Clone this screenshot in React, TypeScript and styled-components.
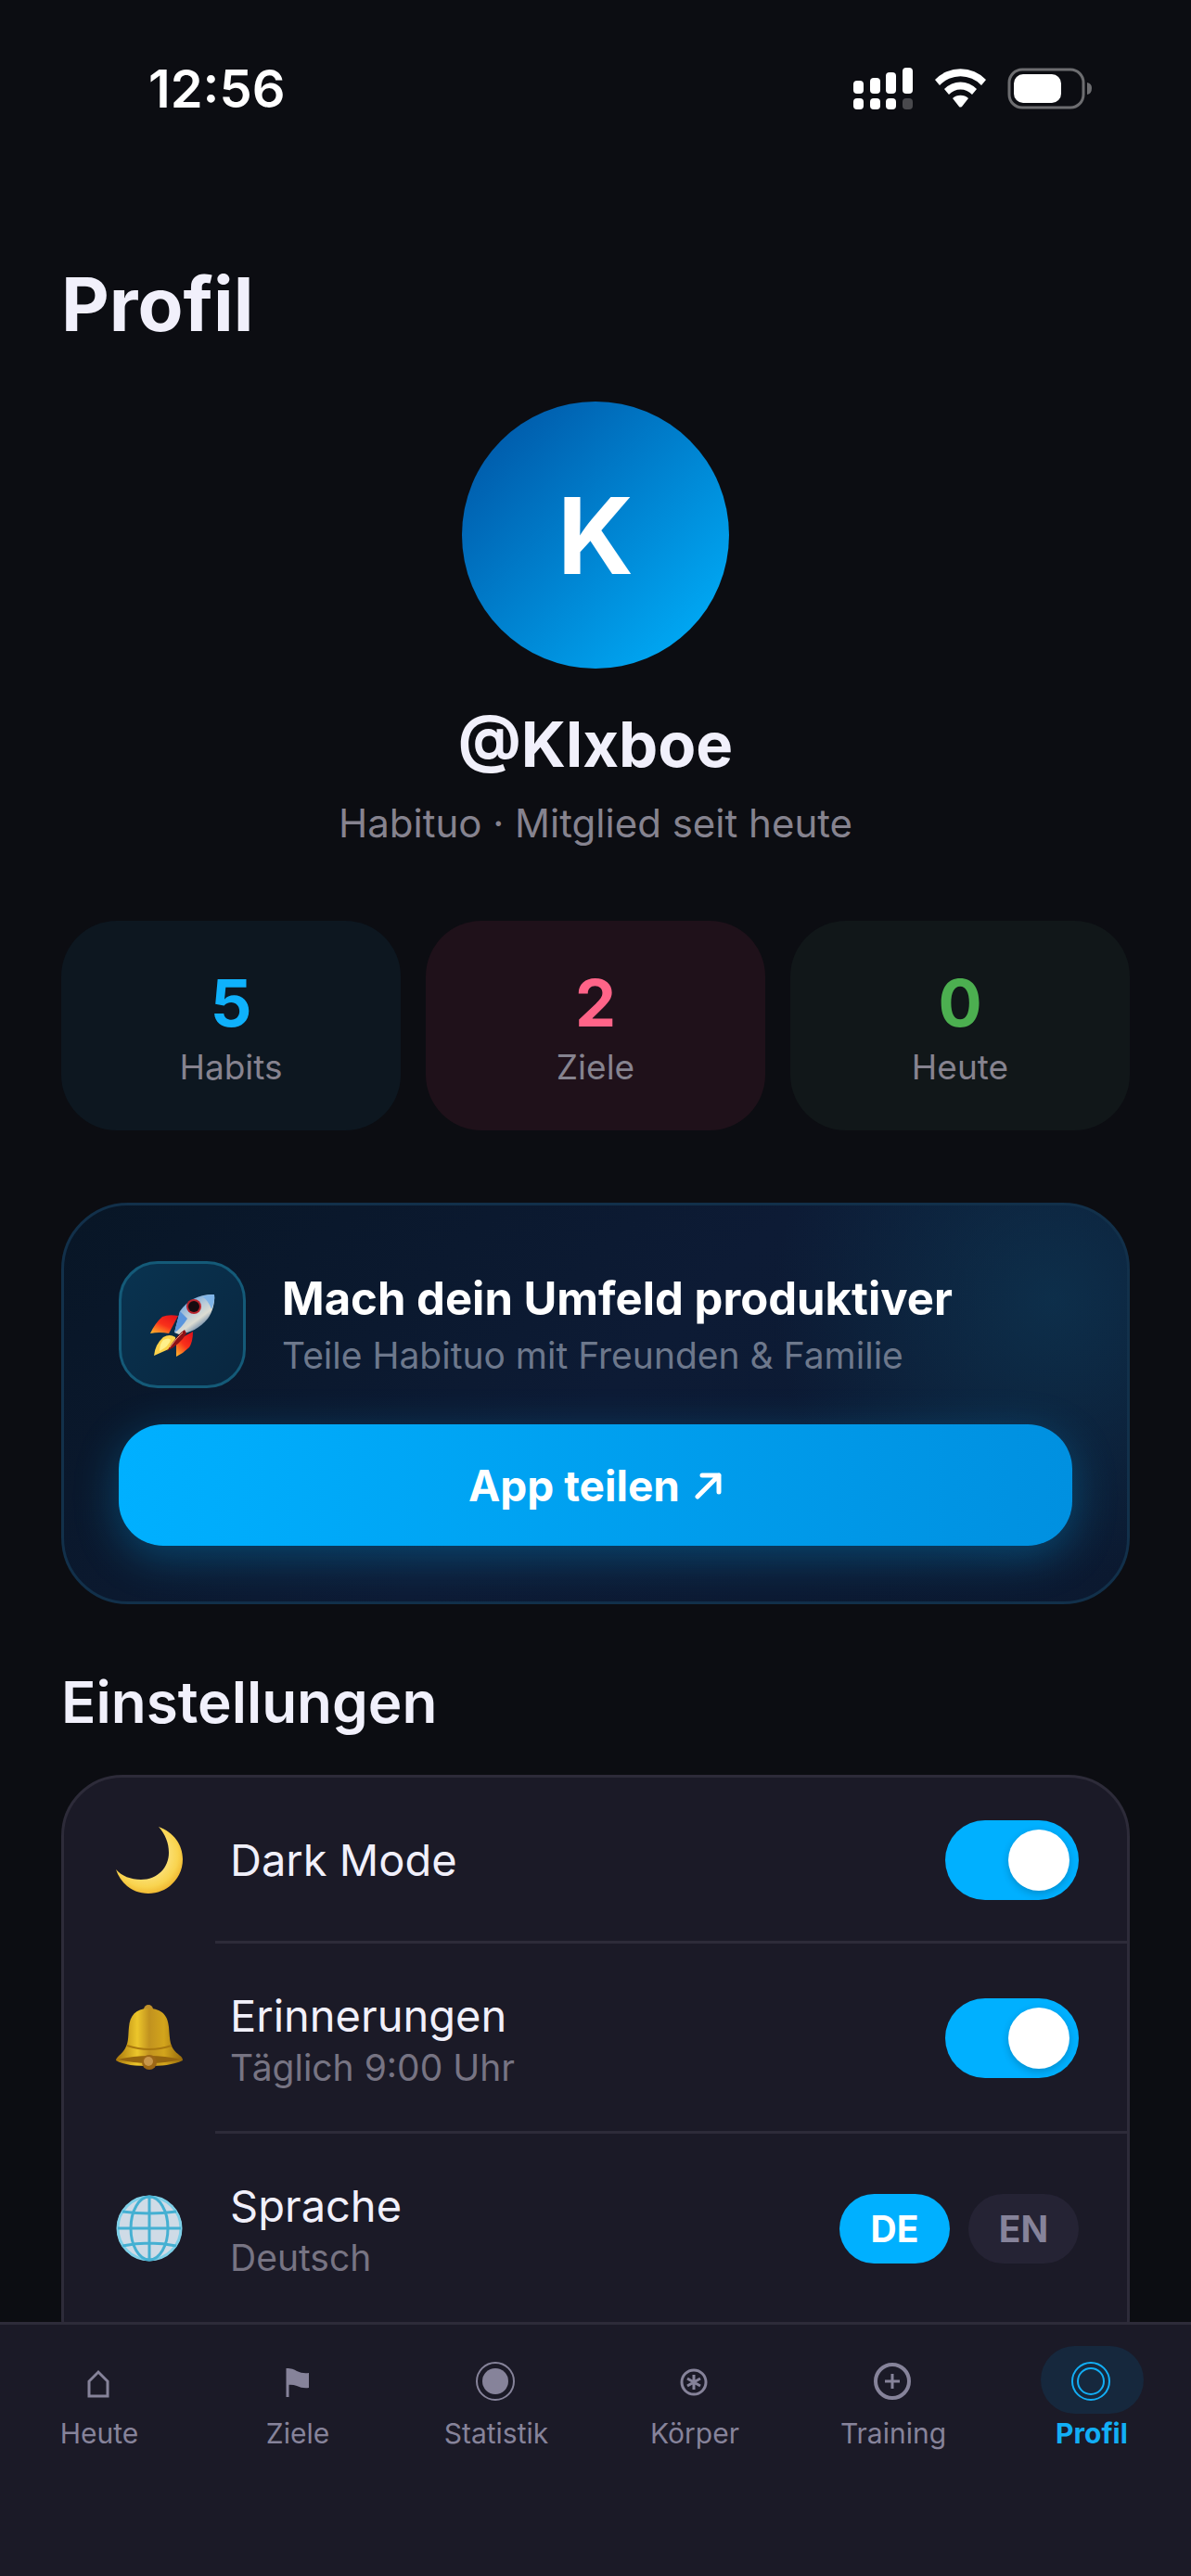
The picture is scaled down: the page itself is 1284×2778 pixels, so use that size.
import React, { useState } from 'react'
import styled, { createGlobalStyle } from 'styled-components'

const RocketIcon = () => (
  <svg width="70" height="68" viewBox="0 0 70 68" aria-hidden="true">
    <defs>
      <linearGradient id="rocketBody" x1="0.2" y1="0.1" x2="0.75" y2="0.85">
        <stop offset="0" stopColor="#5b9be0" />
        <stop offset="0.45" stopColor="#b9cbd8" />
        <stop offset="0.7" stopColor="#dcdcd2" />
        <stop offset="1" stopColor="#4a6f9c" />
      </linearGradient>
      <linearGradient id="rocketFin" x1="0.8" y1="0" x2="0.1" y2="1">
        <stop offset="0" stopColor="#e3141a" />
        <stop offset="0.5" stopColor="#f9301a" />
        <stop offset="1" stopColor="#ffb32c" />
      </linearGradient>
    </defs>
    <path d="M13 25 Q20 22 30 24 L20 43 Q10 41 0 43 Q5 32 13 25Z" fill="url(#rocketFin)" />
    <path d="M35 47 L46 41 Q46 52 42 58 Q36 64 28 68 Q28 60 28 54Z" fill="url(#rocketFin)" />
    <path d="M14 47 Q21 43 27 47 Q29 54 22 59 Q13 63 4 67 Q5 55 14 47Z" fill="#fbd24b" />
    <path d="M14 50 Q20 47 22 50 Q20 57 10 62 Q10 54 14 50Z" fill="#fff08a" />
    <path d="M69 1 C54 0 40 7 32 19 L26 42 L31 44 C42 43 54 37 62 27 C67 20 70 10 69 1Z" fill="url(#rocketBody)" />
    <path d="M32 19 L26 42 Q33 38 40 27Z" fill="#5a95dd" />
    <path d="M56 3 Q63 1 69 1 Q70 8 66 17 Q63 8 56 3Z" fill="#7fb4e8" />
    <path d="M37 39 Q29 44 18 62 Q32 55 39 43Z" fill="#8e1116" />
    <path d="M35 42 Q28 48 21 58" stroke="#e9a37a" strokeWidth="1" fill="none" />
    <ellipse cx="47" cy="14" rx="8" ry="8" fill="#b7232b" />
    <ellipse cx="47" cy="14" rx="6" ry="6" fill="#160b10" />
  </svg>
)

const MoonIcon = () => (
  <svg width="72" height="72" viewBox="0 0 72 72" aria-hidden="true">
    <defs>
      <radialGradient id="moon" cx="0.45" cy="0.42" r="0.6">
        <stop offset="0.5" stopColor="#fbe17a" />
        <stop offset="0.8" stopColor="#f9d44f" />
        <stop offset="1" stopColor="#efb52e" />
      </radialGradient>
    </defs>
    <path
      d="M46 0 C62 6 72 19 72 35 C72 56 55 72 35 72 C19 72 5 62 0 46 C6 53 16 57 27 57 C45 57 57 44 57 28 C57 17 53 8 46 0Z"
      fill="url(#moon)"
    />
  </svg>
)

const BellIcon = () => (
  <svg width="72" height="72" viewBox="0 0 72 72" aria-hidden="true">
    <defs>
      <linearGradient id="bell" x1="0" x2="1">
        <stop offset="0" stopColor="#a8760c" />
        <stop offset="0.32" stopColor="#ecc62b" />
        <stop offset="0.5" stopColor="#c1921f" />
        <stop offset="0.72" stopColor="#d3a51c" />
        <stop offset="1" stopColor="#94680c" />
      </linearGradient>
    </defs>
    <circle cx="35" cy="5" r="5" fill="#c0912b" />
    <path
      d="M35 4 C50 4 56 12 57 24 C58 36 58 42 62 48 C66 54 72 55 72 60 C62 65 48 66 36 66 C22 66 8 65 0 60 C0 56 7 53 10 47 C14 40 13 33 14 24 C15 12 21 4 35 4Z"
      fill="url(#bell)"
    />
    <path d="M12 44 Q36 52 60 44" stroke="#a9780f" strokeWidth="2" fill="none" />
    <path d="M2 59 Q36 51 70 59 Q36 67 2 59Z" fill="#96660f" />
    <circle cx="36" cy="62" r="8" fill="#9c6615" />
    <circle cx="35" cy="61" r="5" fill="#c8964a" />
  </svg>
)

const GlobeIcon = () => (
  <svg width="72" height="72" viewBox="0 0 72 72" aria-hidden="true">
    <circle cx="36" cy="36" r="35" fill="#cfdbe6" />
    <g stroke="#45b0d2" strokeWidth="3" fill="none">
      <circle cx="36" cy="36" r="34" stroke="#7fd0e8" />
      <ellipse cx="36" cy="36" rx="20" ry="34" />
      <path d="M36 2 V70 M2 36 H70 M7 18 Q36 22 65 18 M7 55 Q36 49 65 55" />
    </g>
  </svg>
)

const ArrowIcon = () => (
  <svg width="30" height="30" viewBox="0 0 30 30" fill="none" stroke="#fff" strokeWidth="5" strokeLinecap="round" strokeLinejoin="round" aria-hidden="true">
    <path d="M3 27 L26 4 M8 4 H26 V22" />
  </svg>
)

const StatusIcons = () => (
  <svg width="258" height="48" viewBox="0 0 258 48" aria-hidden="true">
    <g fill="#fff">
      <rect x="0" y="15" width="11" height="14" rx="4" />
      <rect x="18" y="12" width="11" height="17" rx="4" />
      <rect x="35" y="6" width="11" height="23" rx="4" />
      <rect x="53" y="1" width="11" height="28" rx="4" />
      <rect x="0" y="34" width="11" height="12" rx="4" />
      <rect x="18" y="34" width="11" height="12" rx="4" />
      <rect x="35" y="34" width="11" height="12" rx="4" />
      <rect x="53" y="34" width="11" height="12" rx="4" opacity="0.25" />
      <path d="M88 14 A38 38 0 0 1 143 14 L138 20 A31 31 0 0 0 93 20Z" />
      <path d="M98 24 A24 24 0 0 1 133 24 L128 30 A17 17 0 0 0 103 30Z" />
      <path d="M107 34 A13 13 0 0 1 124 34 L117 43 Q115 44 114 43Z" />
      <rect x="173" y="8" width="51" height="31" rx="10" />
      <path d="M252 17 Q257 18 257 23 Q257 29 252 30Z" opacity="0.4" />
    </g>
    <rect x="168" y="3" width="80" height="41" rx="14" fill="none" stroke="#fff" strokeOpacity="0.4" strokeWidth="3" />
  </svg>
)

const tabIcons: Record<string, React.ReactNode> = {
  Heute: <path d="M12 37 V21 L22 11 L32 21 V37Z" strokeWidth="3" />,
  Ziele: (
    <>
      <path d="M12 7 V38" strokeWidth="3" />
      <path d="M11 7 Q18 7 22 10 Q28 13 35 12 V28 Q28 29 22 26 Q17 24 11 25Z" fill="currentColor" stroke="none" />
    </>
  ),
  Statistik: (
    <>
      <circle cx="22" cy="21" r="20" strokeWidth="2" />
      <circle cx="22" cy="21" r="14" fill="currentColor" stroke="none" />
    </>
  ),
  'Körper': (
    <>
      <circle cx="22" cy="22" r="13" strokeWidth="3" />
      <path d="M22 14 V30 M15 18 L29 26 M29 18 L15 26" strokeWidth="3" />
    </>
  ),
  Training: (
    <>
      <circle cx="22" cy="21" r="18" strokeWidth="4" />
      <path d="M22 13 V29 M14 21 H30" strokeWidth="3" />
    </>
  ),
  Profil: (
    <>
      <circle cx="22" cy="21" r="20" strokeWidth="2" />
      <circle cx="22" cy="21" r="14" strokeWidth="2" />
    </>
  ),
}

const stats = [
  { value: 5, label: 'Habits', color: '#0fb1fb', bg: '#0d1720' },
  { value: 2, label: 'Ziele', color: '#ff6488', bg: '#1f111a' },
  { value: 0, label: 'Heute', color: '#4caf50', bg: '#111719' },
]

const App = () => {
  const [dark, setDark] = useState(true)
  const [reminders, setReminders] = useState(true)
  const [lang, setLang] = useState('DE')
  const [tab, setTab] = useState('Profil')

  return (
    <Screen>
      <GlobalStyle />
      <StatusBar>
        <Time>12:56</Time>
        <StatusIcons />
      </StatusBar>

      <Main>
        <Title>Profil</Title>

        <ProfileHead>
          <Avatar>K</Avatar>
          <UserName>@Klxboe</UserName>
          <Since>Habituo · Mitglied seit heute</Since>
        </ProfileHead>

        <Stats>
          {stats.map((s) => (
            <Stat key={s.label} $bg={s.bg}>
              <StatValue $color={s.color}>{s.value}</StatValue>
              <StatLabel>{s.label}</StatLabel>
            </Stat>
          ))}
        </Stats>

        <Promo>
          <PromoTop>
            <PromoIcon><RocketIcon /></PromoIcon>
            <div>
              <PromoTitle>Mach dein Umfeld produktiver</PromoTitle>
              <PromoText>Teile Habituo mit Freunden &amp; Familie</PromoText>
            </div>
          </PromoTop>
          <ShareButton type="button">App teilen <ArrowIcon /></ShareButton>
        </Promo>

        <SectionTitle>Einstellungen</SectionTitle>

        <List>
          <Row>
            <MoonIcon />
            <RowText htmlFor="dark">
              <RowName>Dark Mode</RowName>
            </RowText>
            <Switch id="dark" type="checkbox" checked={dark} onChange={() => setDark(!dark)} />
          </Row>
          <Divider />
          <Row>
            <BellIcon />
            <RowText htmlFor="reminders">
              <RowName>Erinnerungen</RowName>
              <RowHint>Täglich 9:00 Uhr</RowHint>
            </RowText>
            <Switch id="reminders" type="checkbox" checked={reminders} onChange={() => setReminders(!reminders)} />
          </Row>
          <Divider />
          <Row>
            <GlobeIcon />
            <RowText as="div">
              <RowName>Sprache</RowName>
              <RowHint>{lang === 'DE' ? 'Deutsch' : 'English'}</RowHint>
            </RowText>
            <Langs>
              {['DE', 'EN'].map((l) => (
                <LangButton key={l} type="button" $active={l === lang} aria-pressed={l === lang} onClick={() => setLang(l)}>
                  {l}
                </LangButton>
              ))}
            </Langs>
          </Row>
        </List>
      </Main>

      <TabBar>
        {Object.keys(tabIcons).map((name) => (
          <Tab key={name} href="#" $active={name === tab} onClick={() => setTab(name)}>
            <TabPill $active={name === tab}>
              <svg width="44" height="44" viewBox="1 -2 44 44" fill="none" stroke="currentColor" aria-hidden="true">
                {tabIcons[name]}
              </svg>
            </TabPill>
            {name}
          </Tab>
        ))}
      </TabBar>
    </Screen>
  )
}

export default App

const GlobalStyle = createGlobalStyle`
* {
  box-sizing: border-box;
}
body {
  margin: 0;
  background-color: #0c0d12;
  font-family: Inter, "Liberation Sans", sans-serif;
}
h1, h2, h3, p {
  margin: 0;
}
button {
  font-family: inherit;
  border: none;
  cursor: pointer;
}
svg {
  display: block;
  flex-shrink: 0;
}
`
const Screen = styled.div`
height: 100vh;
display: flex;
flex-direction: column;
color: #f1f0fb;
`
const StatusBar = styled.div`
height: 192px;
padding: 0 106px 0 160px;
display: flex;
align-items: center;
justify-content: space-between;
flex-shrink: 0;
`
const Time = styled.div`
font-size: 56px;
font-weight: 600;
color: #fff;
`
const Main = styled.main`
flex: 1;
min-height: 0;
overflow-y: auto;
scrollbar-width: none;
padding: 86px 66px 0;
`
const Title = styled.h1`
font-size: 80px;
font-weight: 700;
line-height: 100px;
`
const ProfileHead = styled.section`
margin-top: 55px;
display: flex;
flex-direction: column;
align-items: center;
`
const Avatar = styled.div`
width: 288px;
height: 288px;
border-radius: 50%;
background: linear-gradient(135deg, #0050a0, #00b4ff);
display: flex;
align-items: center;
justify-content: center;
color: #fff;
font-size: 114px;
font-weight: 700;
`
const UserName = styled.h2`
margin-top: 38px;
font-size: 67px;
font-weight: 700;
line-height: 88px;
`
const Since = styled.p`
margin-top: 16px;
font-size: 42px;
line-height: 50px;
color: #86838f;
`
const Stats = styled.section`
margin-top: 80px;
display: grid;
grid-template-columns: repeat(3, 1fr);
gap: 27px;
`
const Stat = styled.div<{ $bg: string }>`
padding: 45px 0 43px;
border-radius: 60px;
background-color: ${(p) => p.$bg};
text-align: center;
`
const StatValue = styled.div<{ $color: string }>`
font-size: 70px;
font-weight: 700;
line-height: 88px;
color: ${(p) => p.$color};
`
const StatLabel = styled.div`
font-size: 37px;
line-height: 50px;
color: #86838f;
`
const Promo = styled.section`
margin-top: 78px;
padding: 60px 59px;
border: 3px solid #12304a;
border-radius: 72px;
background: radial-gradient(circle 300px at 93% 24%, rgba(14, 60, 90, 0.6), transparent),
  linear-gradient(135deg, #081626, #0d1b35 50%, #0b1930);
`
const PromoTop = styled.div`
display: flex;
align-items: center;
gap: 39px;
`
const PromoIcon = styled.div`
width: 137px;
height: 137px;
flex-shrink: 0;
border: 3px solid #145a78;
border-radius: 42px;
background: linear-gradient(135deg, #093350, #09263f);
display: flex;
align-items: center;
justify-content: center;
`
const PromoTitle = styled.h3`
font-size: 49px;
font-weight: 700;
line-height: 66px;
color: #fff;
`
const PromoText = styled.p`
font-size: 39px;
line-height: 56px;
color: #6d788c;
`
const ShareButton = styled.button`
width: 100%;
height: 131px;
margin-top: 39px;
border-radius: 48px;
background: linear-gradient(90deg, #00b0ff, #0090e0);
box-shadow: 0 12px 48px rgba(0, 176, 255, 0.3);
display: flex;
align-items: center;
justify-content: center;
gap: 16px;
color: #fff;
font-size: 46px;
font-weight: 700;
`
const SectionTitle = styled.h2`
margin-top: 66px;
font-size: 62px;
font-weight: 600;
line-height: 80px;
`
const List = styled.section`
margin-top: 38px;
padding-bottom: 60px;
border: 3px solid #2d2b39;
border-radius: 66px;
background-color: #1b1a27;
`
const Row = styled.div`
padding: 46px 52px 44px 56px;
display: flex;
align-items: center;
gap: 51px;
`
const RowText = styled.label`
flex: 1;
display: flex;
flex-direction: column;
`
const RowName = styled.span`
font-size: 47px;
line-height: 64px;
`
const RowHint = styled.span`
font-size: 39px;
line-height: 48px;
color: #777483;
`
const Divider = styled.hr`
height: 3px;
margin: 0 0 0 163px;
border: none;
background-color: #2d2b39;
`
const Switch = styled.input`
appearance: none;
width: 144px;
height: 86px;
margin: 0;
padding: 10px;
border-radius: 43px;
background-color: #3a3847;
display: flex;
cursor: pointer;

&::before {
  content: '';
  width: 66px;
  height: 66px;
  border-radius: 50%;
  background-color: #fff;
  box-shadow: 0 3px 9px rgba(0, 0, 0, 0.2);
}
&:checked {
  background-color: #00b0ff;
  justify-content: flex-end;
}
`
const Langs = styled.div`
display: flex;
gap: 20px;
`
const LangButton = styled.button<{ $active: boolean }>`
width: 119px;
height: 75px;
padding: 0;
border-radius: 38px;
background-color: ${(p) => (p.$active ? '#00b0ff' : '#252334')};
color: ${(p) => (p.$active ? '#fff' : '#86839a')};
font-size: 39px;
font-weight: 700;
`
const TabBar = styled.nav`
height: 274px;
flex-shrink: 0;
padding-top: 23px;
border-top: 3px solid #2d2b39;
background-color: #1b1a27;
display: grid;
grid-template-columns: repeat(6, 1fr);
`
const Tab = styled.a<{ $active: boolean }>`
display: flex;
flex-direction: column;
align-items: center;
gap: 1px;
text-decoration: none;
font-size: 30px;
font-weight: ${(p) => (p.$active ? 700 : 400)};
line-height: 40px;
color: ${(p) => (p.$active ? '#12aef5' : '#86839a')};
`
const TabPill = styled.span<{ $active: boolean }>`
width: 111px;
height: 73px;
border-radius: 37px;
background-color: ${(p) => (p.$active ? '#16283d' : 'transparent')};
display: flex;
align-items: center;
justify-content: center;
`
